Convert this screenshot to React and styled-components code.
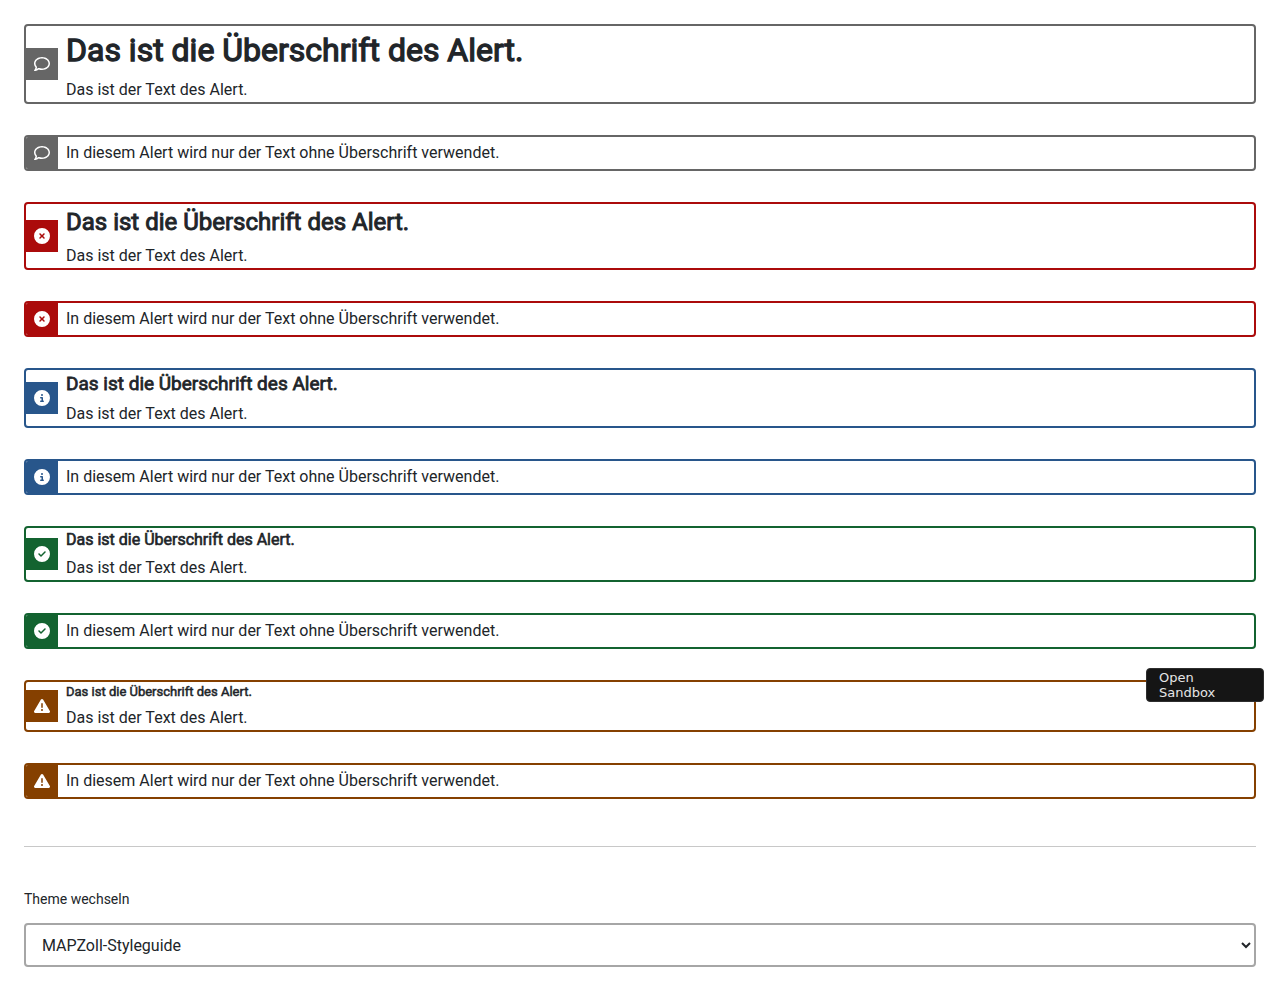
import React from "react";
import styled, { createGlobalStyle } from "styled-components";
import {
  FaRegComment,
  FaCircleXmark,
  FaCircleInfo,
  FaCircleCheck,
  FaTriangleExclamation,
} from "react-icons/fa6";

const GlobalStyle = createGlobalStyle`
  *, *::before, *::after { box-sizing: border-box; }
  body {
    margin: 0;
    background: #fff;
    color: #212529;
    font-family: Roboto, "Liberation Sans", sans-serif;
    font-size: 16px;
    line-height: 24px;
  }
`;

const Page = styled.main`
  position: relative;
  padding: 24px;
`;

const AlertList = styled.div`
  display: flex;
  flex-direction: column;
  gap: 31px;
`;

const AlertBox = styled.div`
  display: flex;
  align-items: center;
  min-height: 36px;
  overflow: hidden;
  border: 2px solid ${(p) => p.$color};
  border-radius: 4px;
`;

const AlertIcon = styled.div`
  display: flex;
  flex: none;
  align-items: center;
  justify-content: center;
  width: 32px;
  height: 32px;
  background: ${(p) => p.$color};
  color: #fff;
  font-size: 16px;
`;

const AlertContent = styled.div`
  flex: 1;
  padding: 0 8px;
`;

const AlertHeading = styled.h1`
  margin: 0 0 4px;
  font-size: ${(p) => p.$size}px;
  line-height: ${(p) => p.$line}px;
  font-weight: 400;
  -webkit-text-stroke: 0.04em currentColor;
`;

const AlertText = styled.p`
  margin: 0;
`;

const Divider = styled.hr`
  height: 1px;
  margin: 47px 0 42px;
  border: 0;
  background: #c8c8c8;
`;

const Field = styled.div`
  display: flex;
  flex-direction: column;
  gap: 14px;
`;

const Label = styled.label`
  font-size: 14px;
  line-height: 20px;
`;

const Select = styled.select`
  width: 100%;
  height: 44px;
  padding: 0 0 0 12px;
  border: 2px solid #a6a6a6;
  border-radius: 4px;
  background: #fff;
  color: inherit;
  font: inherit;
`;

const SandboxButton = styled.button`
  position: absolute;
  top: 668px;
  right: 16px;
  width: 118px;
  padding: 1px 32px 1px 12px;
  border: 1px solid #2e2e2e;
  border-radius: 4px;
  background: #151515;
  color: #e5e5e5;
  font-family: "DejaVu Sans", sans-serif;
  font-size: 13px;
  line-height: 15px;
  text-align: left;
`;

const variants = [
  { color: "#666666", Icon: FaRegComment, level: "h1", size: 32, line: 48 },
  { color: "#ab0b0b", Icon: FaCircleXmark, level: "h2", size: 24, line: 36 },
  { color: "#28568b", Icon: FaCircleInfo, level: "h3", size: 19, line: 28 },
  { color: "#136330", Icon: FaCircleCheck, level: "h4", size: 16, line: 24 },
  { color: "#854000", Icon: FaTriangleExclamation, level: "h5", size: 13, line: 20 },
];

function Alert({ variant, heading, children }) {
  const { color, Icon, level, size, line } = variant;
  return (
    <AlertBox role="alert" $color={color}>
      <AlertIcon $color={color}>
        <Icon aria-hidden="true" />
      </AlertIcon>
      <AlertContent>
        {heading && (
          <AlertHeading as={level} $size={size} $line={line}>
            {heading}
          </AlertHeading>
        )}
        <AlertText>{children}</AlertText>
      </AlertContent>
    </AlertBox>
  );
}

export default function App() {
  return (
    <>
      <GlobalStyle />
      <Page>
        <AlertList>
          {variants.map((variant) => (
            <React.Fragment key={variant.level}>
              <Alert variant={variant} heading="Das ist die Überschrift des Alert.">
                Das ist der Text des Alert.
              </Alert>
              <Alert variant={variant}>
                In diesem Alert wird nur der Text ohne Überschrift verwendet.
              </Alert>
            </React.Fragment>
          ))}
        </AlertList>
        <Divider />
        <Field>
          <Label htmlFor="theme">Theme wechseln</Label>
          <Select id="theme" defaultValue="mapzoll">
            <option value="mapzoll">MAPZoll-Styleguide</option>
          </Select>
        </Field>
        <SandboxButton type="button">Open Sandbox</SandboxButton>
      </Page>
    </>
  );
}
